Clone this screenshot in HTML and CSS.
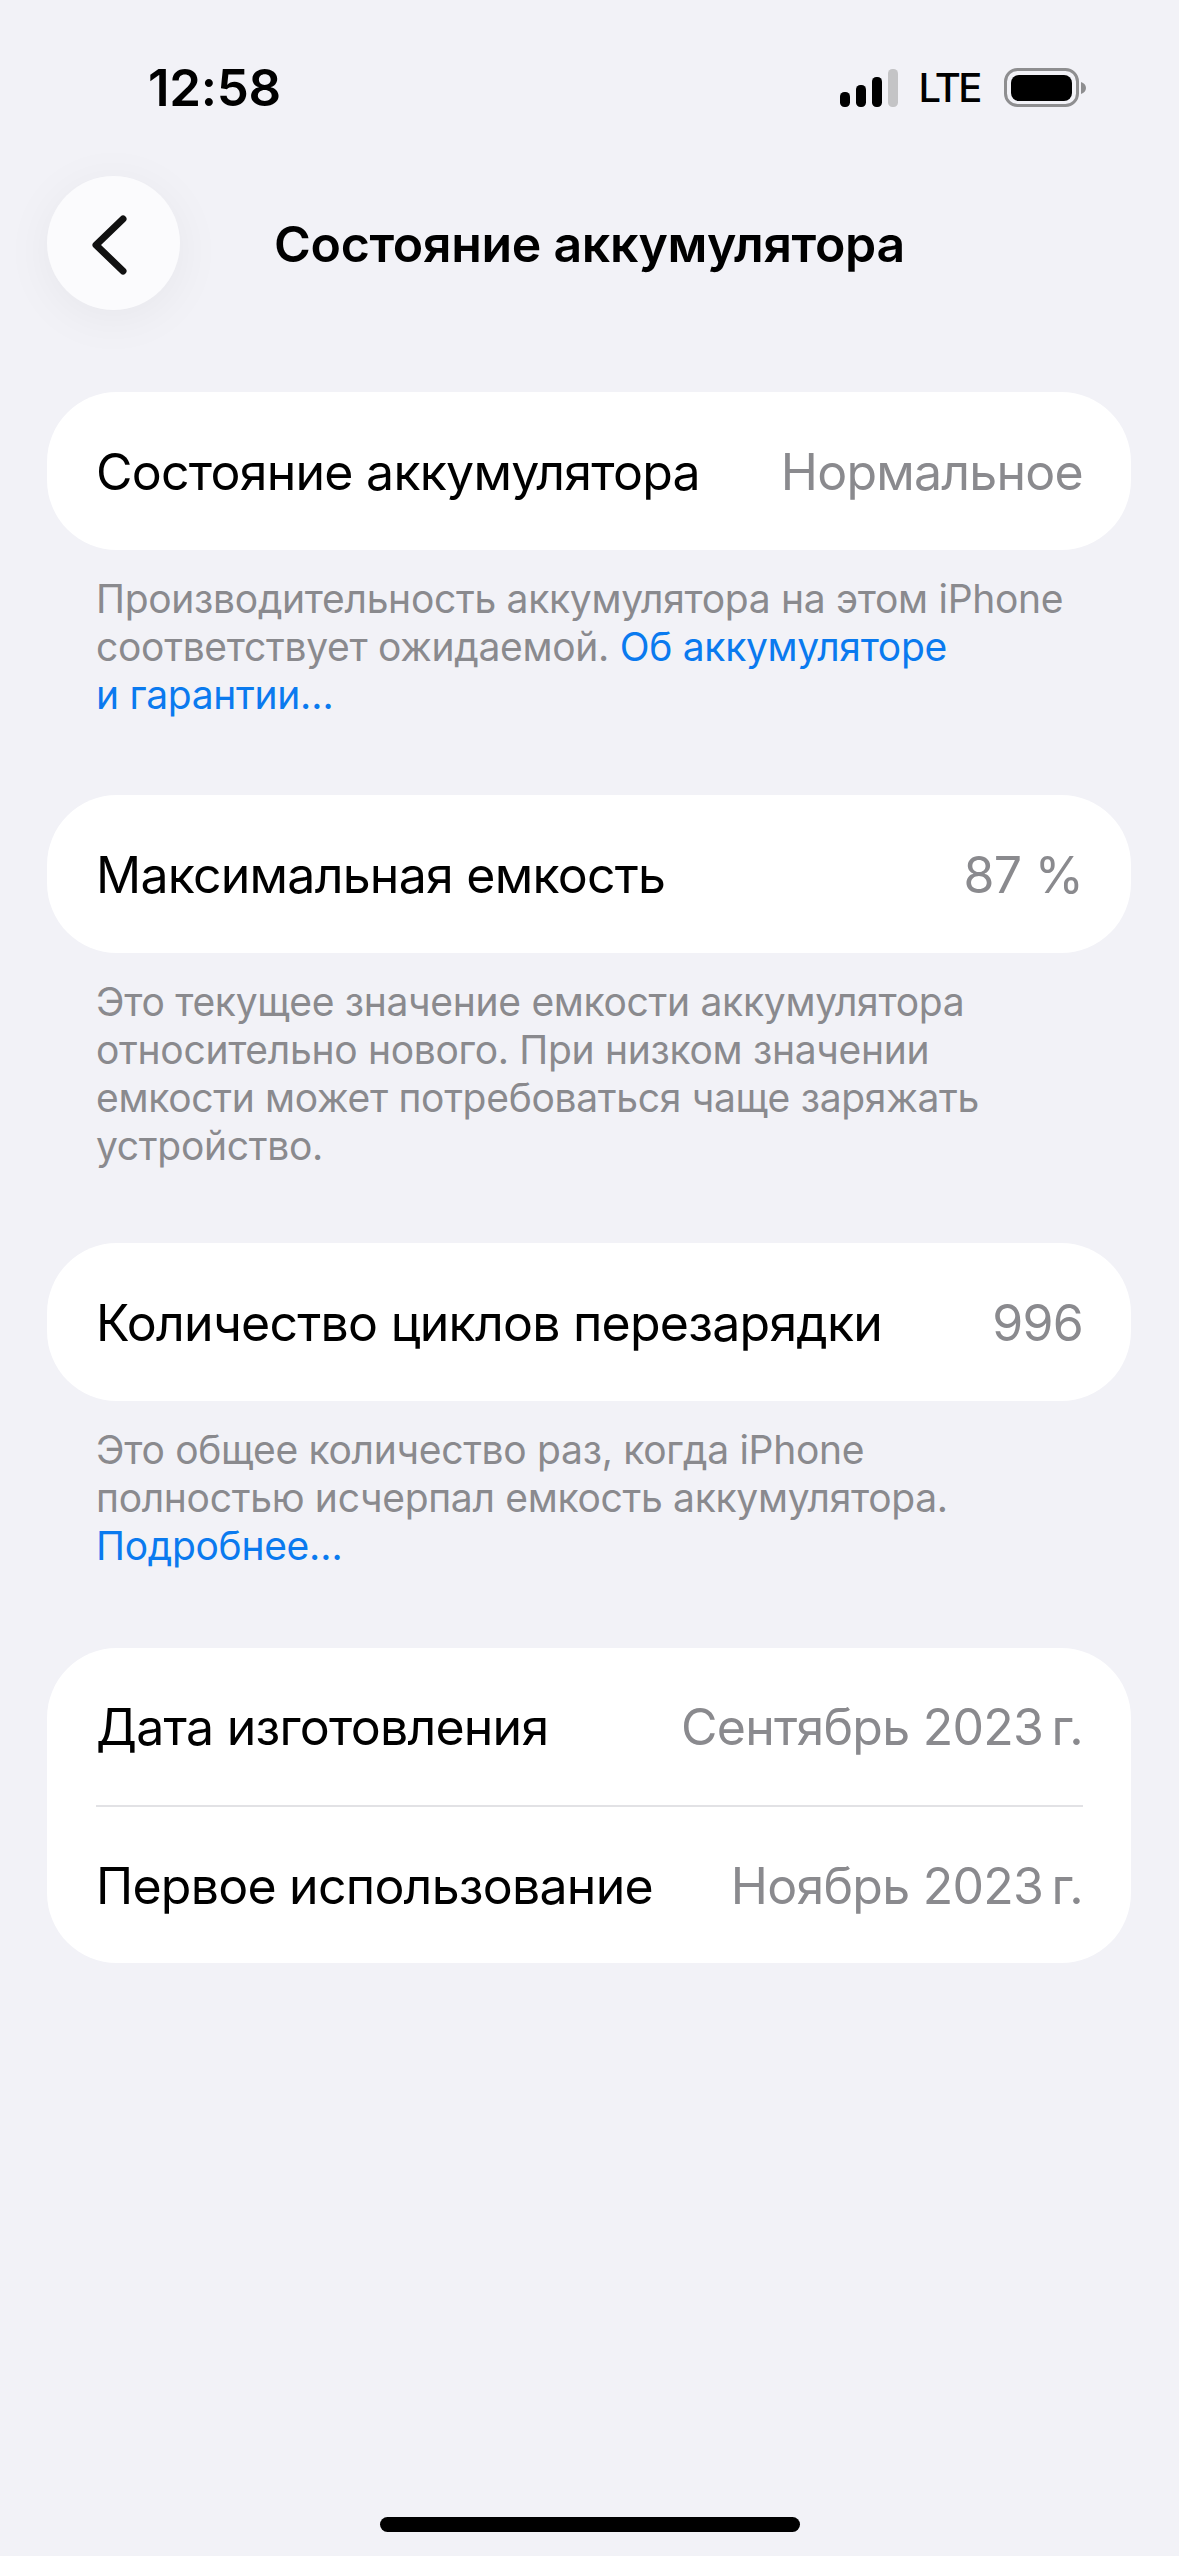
FILE: index.html
```html
<!DOCTYPE html>
<html lang="ru">
<head>
<meta charset="utf-8">
<title>Состояние аккумулятора</title>
<link rel="stylesheet" href="styles.css">
</head>
<body>
<div class="screen">
  <div class="status">
    <span class="time">12:58</span>
    <div class="status-right">
      <svg class="signal" width="58" height="38" viewBox="0 0 58 38">
        <rect x="0" y="23" width="10" height="15" rx="4.5" fill="#000"/>
        <rect x="16" y="16" width="10" height="22" rx="4.5" fill="#000"/>
        <rect x="32" y="8" width="10" height="30" rx="4.5" fill="#000"/>
        <rect x="48" y="0" width="10" height="38" rx="4.5" fill="#c4c4c6"/>
      </svg>
      <span class="lte">LTE</span>
      <svg class="battery" width="82" height="40" viewBox="0 0 82 40">
        <rect x="1.5" y="1.5" width="72" height="36" rx="12" fill="none" stroke="#8e8e90" stroke-width="3"/>
        <rect x="7" y="7" width="61" height="26" rx="8" fill="#000"/>
        <path d="M77 14c3 1 5 3 5 6s-2 5-5 6z" fill="#8e8e90"/>
      </svg>
    </div>
  </div>

  <header class="nav">
    <button class="back" aria-label="Назад">
      <svg width="40" height="60" viewBox="0 0 40 60">
        <path d="M34 4 L7 30 L34 56" fill="none" stroke="#111" stroke-width="7" stroke-linecap="round" stroke-linejoin="round"/>
      </svg>
    </button>
    <h1 class="title">Состояние аккумулятора</h1>
  </header>

  <main class="content">
    <section class="group">
      <div class="card">
        <div class="row"><span class="label">Состояние аккумулятора</span><span class="value">Нормальное</span></div>
      </div>
      <p class="note">Производительность аккумулятора на этом iPhone<br>соответствует ожидаемой. <a class="link">Об аккумуляторе<br>и гарантии…</a></p>
    </section>

    <section class="group group-b">
      <div class="card">
        <div class="row"><span class="label">Максимальная емкость</span><span class="value">87 %</span></div>
      </div>
      <p class="note">Это текущее значение емкости аккумулятора<br>относительно нового. При низком значении<br>емкости может потребоваться чаще заряжать<br>устройство.</p>
    </section>

    <section class="group group-c">
      <div class="card">
        <div class="row"><span class="label">Количество циклов перезарядки</span><span class="value">996</span></div>
      </div>
      <p class="note">Это общее количество раз, когда iPhone<br>полностью исчерпал емкость аккумулятора.<br><a class="link">Подробнее…</a></p>
    </section>

    <section class="group group-d">
      <div class="card">
        <div class="row row-pair"><span class="label">Дата изготовления</span><span class="value">Сентябрь 2023&thinsp;г.</span></div>
        <div class="divider"></div>
        <div class="row row-pair"><span class="label">Первое использование</span><span class="value">Ноябрь 2023&thinsp;г.</span></div>
      </div>
    </section>
  </main>

  <div class="home"></div>
</div>
</body>
</html>
```
FILE: styles.css
```css
* { box-sizing: border-box; }
html, body { margin: 0; padding: 0; }
body {
  background: #f2f2f7;
  font-family: Inter, "Noto Sans", "Liberation Sans", sans-serif;
  color: #000;
}
.screen {
  width: 1179px;
  height: 2556px;
  display: flex;
  flex-direction: column;
  overflow: hidden;
}
.status {
  height: 176px;
  flex: none;
  display: flex;
  justify-content: space-between;
  align-items: flex-start;
  padding: 58px 93px 0 148px;
}
.time {
  font-size: 51px;
  font-weight: 600;
  line-height: 60px;
  letter-spacing: -0.3px;
}
.status-right {
  display: flex;
  align-items: center;
  gap: 24px;
  margin-top: 10px;
}
.signal { margin-right: -4px; }
.lte {
  font-size: 40px;
  font-weight: 500;
  line-height: 40px;
  letter-spacing: -2.5px;
}
.nav {
  height: 134px;
  flex: none;
  display: flex;
  align-items: center;
  padding-left: 47px;
  gap: 94px;
}
.back {
  width: 133px;
  height: 134px;
  flex: none;
  border: 0;
  padding: 3px 9px 0 0;
  border-radius: 50%;
  background: #fbfbfd;
  box-shadow: 0 8px 50px rgba(0, 0, 0, 0.05);
  display: flex;
  align-items: center;
  justify-content: center;
}
.title {
  margin: 1px 0 0;
  font-size: 50px;
  font-weight: 600;
  line-height: 60px;
  letter-spacing: -0.3px;
}
.content {
  padding: 82px 48px 0 47px;
  display: flex;
  flex-direction: column;
}
.group-b { margin-top: 76px; }
.group-c { margin-top: 73px; }
.group-d { margin-top: 78px; }
.card {
  background: #fff;
  border-radius: 70px;
  padding: 0 48px 0 49px;
}
.row {
  height: 158px;
  padding-top: 2px;
  display: flex;
  justify-content: space-between;
  align-items: center;
  font-size: 50px;
  letter-spacing: -0.75px;
}
.row-pair { height: 156.5px; }
.value { color: #8a8a8e; }
.divider {
  height: 2px;
  background: #e2e2e5;
}
.note {
  margin: 25px 0 0;
  padding-left: 49px;
  font-size: 39px;
  line-height: 48px;
  letter-spacing: -0.3px;
  color: #8a8a8e;
}
.link { color: #0a7aef; }
.home {
  width: 420px;
  height: 15px;
  margin: auto auto 24px;
  border-radius: 8px;
  background: #000;
}
```
